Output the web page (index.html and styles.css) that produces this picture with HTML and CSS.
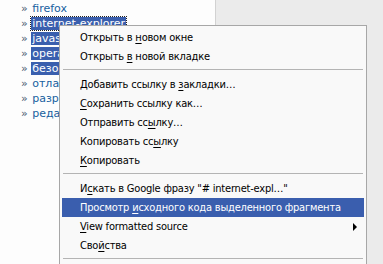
FILE: index.html
```html
<!DOCTYPE html>
<html>
<head>
<meta charset="utf-8">
<link rel="stylesheet" href="styles.css">
</head>
<body>
<div class="page">
  <div class="pane">
    <ul class="tags">
      <li><span class="bul">»</span> <a class="tag">firefox</a></li>
      <li><span class="bul">»</span> <a class="tag sel focus">internet-explorer</a></li>
      <li><span class="bul">»</span> <a class="tag sel">javas</a></li>
      <li><span class="bul">»</span> <a class="tag sel">opera</a></li>
      <li><span class="bul">»</span> <a class="tag sel">безо</a></li>
      <li><span class="bul">»</span> <a class="tag">отлад</a></li>
      <li><span class="bul">»</span> <a class="tag">разра</a></li>
      <li><span class="bul">»</span> <a class="tag">редак</a></li>
    </ul>
  </div>
  <div class="side"></div>
</div>
<div class="menu">
  <div class="item">Открыть в <u>н</u>овом окне</div>
  <div class="item">Открыть <u>в</u> новой вкладке</div>
  <div class="sep"></div>
  <div class="item">Добавить ссылку в <u>з</u>акладки…</div>
  <div class="item"><u>С</u>охранить ссылку как…</div>
  <div class="item">Отправить сс<u>ы</u>лку…</div>
  <div class="item">Копировать сс<u>ы</u>лку</div>
  <div class="item"><u>К</u>опировать</div>
  <div class="sep"></div>
  <div class="item">И<u>с</u>кать в Google фразу "# internet-expl…"</div>
  <div class="item active">Просмотр <u>и</u>сходного кода выделенного фрагмента</div>
  <div class="item sub"><u>V</u>iew formatted source<span class="arrow"></span></div>
  <div class="item">Сво<u>й</u>ства</div>
  <div class="sep"></div>
</div>
</body>
</html>
```
FILE: styles.css
```css
html, body {
  margin: 0;
  padding: 0;
}
body {
  width: 383px;
  height: 264px;
  overflow: hidden;
  background: #ebebeb;
  position: relative;
}
.page {
  display: flex;
  height: 264px;
}
.pane {
  width: 215px;
  background: #fdfdfd;
  border-right: 1px solid #d2d2d2;
  overflow: hidden;
}
.side {
  flex: 1;
  background: #ebebeb;
}
.tags {
  list-style: none;
  margin: 0;
  padding: 1px 0 0 21px;
  font-family: "DejaVu Sans", Verdana, sans-serif;
  font-size: 11px;
  line-height: 15px;
  white-space: nowrap;
}
.bul {
  color: #4a5a70;
}
.tag {
  color: #17609f;
  padding: 0 1px;
}
.tag.sel {
  background: #3a5fae;
  color: #fff;
}
.tag.focus {
  outline: 1px dotted #222;
}
.menu {
  position: absolute;
  left: 59px;
  top: 25px;
  width: 302px;
  height: 245px;
  padding: 2px;
  background: #f9f9f9;
  border: 1px solid #a7a7a7;
  font-family: "DejaVu Sans Condensed", "DejaVu Sans", Tahoma, sans-serif;
  font-size: 11px;
  letter-spacing: -0.2px;
  color: #000;
}
.item {
  height: 19px;
  line-height: 19px;
  padding-left: 18px;
  position: relative;
  white-space: nowrap;
}
.item u {
  text-decoration: underline;
  text-underline-offset: 2px;
}
.item.active {
  background: #3a5eae;
  color: #fff;
}
.arrow {
  position: absolute;
  right: 7px;
  top: 6px;
  width: 0;
  height: 0;
  border-top: 4px solid transparent;
  border-bottom: 4px solid transparent;
  border-left: 4px solid #000;
}
.sep {
  height: 1px;
  margin: 3px 1px 5px;
  background: #b4b4b4;
}
```
